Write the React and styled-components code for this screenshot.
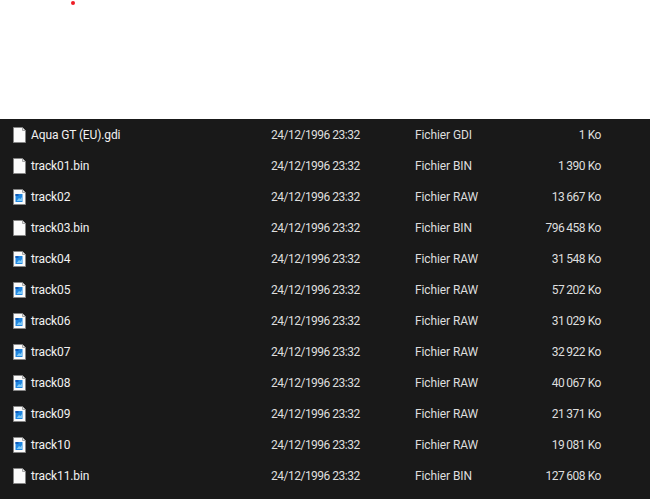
import styled, { createGlobalStyle } from 'styled-components';

const GlobalStyle = createGlobalStyle`
  html, body {
    margin: 0;
    padding: 0;
    background: #fff;
  }
`;

const files = [
  { name: 'Aqua GT (EU).gdi', type: 'Fichier GDI', size: '1 Ko' },
  { name: 'track01.bin', type: 'Fichier BIN', size: '1\u2009390 Ko' },
  { name: 'track02', type: 'Fichier RAW', size: '13\u2009667 Ko', raw: true },
  { name: 'track03.bin', type: 'Fichier BIN', size: '796\u2009458 Ko' },
  { name: 'track04', type: 'Fichier RAW', size: '31\u2009548 Ko', raw: true },
  { name: 'track05', type: 'Fichier RAW', size: '57\u2009202 Ko', raw: true },
  { name: 'track06', type: 'Fichier RAW', size: '31\u2009029 Ko', raw: true },
  { name: 'track07', type: 'Fichier RAW', size: '32\u2009922 Ko', raw: true },
  { name: 'track08', type: 'Fichier RAW', size: '40\u2009067 Ko', raw: true },
  { name: 'track09', type: 'Fichier RAW', size: '21\u2009371 Ko', raw: true },
  { name: 'track10', type: 'Fichier RAW', size: '19\u2009081 Ko', raw: true },
  { name: 'track11.bin', type: 'Fichier BIN', size: '127\u2009608 Ko' },
];

const FileIcon = ({ raw }) => (
  <IconSvg width="13" height="16" viewBox="0 0 13 16">
    <path d="M0.5 0.5H9L12.5 4V15.5H0.5Z" fill="#fbfbfb" stroke="#858585" />
    <path d="M9.5 0.5V3.5H12.5" fill="#e6e6e6" stroke="#a5a5a5" />
    {raw && (
      <>
        <rect x="2.5" y="5" width="7" height="8" fill="#1f86e0" />
        <path d="M3.5 12L6 9L7.5 10L9 8V12Z" fill="#7cc8f5" />
        <rect x="2.5" y="5" width="3" height="2" fill="#1259b5" />
      </>
    )}
  </IconSvg>
);

const App = () => (
  <Page>
    <GlobalStyle />
    <TopArea>
      <RedDot />
    </TopArea>
    <FileList>
      {files.map((file) => (
        <FileRow key={file.name}>
          <NameCell>
            <FileIcon raw={file.raw} />
            <span>{file.name}</span>
          </NameCell>
          <DateCell>24/12/1996 23:32</DateCell>
          <TypeCell>{file.type}</TypeCell>
          <SizeCell>{file.size}</SizeCell>
        </FileRow>
      ))}
    </FileList>
  </Page>
);

export default App;

const Page = styled.div`
  width: 650px;
  height: 499px;
  overflow: hidden;
  font-family: Roboto, 'Open Sans', sans-serif;
  font-size: 12px;
`;
const TopArea = styled.div`
  position: relative;
  height: 119px;
  background: #fff;
`;
const RedDot = styled.div`
  position: absolute;
  left: 71px;
  top: 1px;
  width: 4px;
  height: 4px;
  border-radius: 50%;
  background: #ee1c25;
`;
const FileList = styled.div`
  height: 380px;
  background: #191919;
`;
const FileRow = styled.div`
  display: grid;
  grid-template-columns: 271px 144px 100px 86px;
  align-items: center;
  height: 31px;
  color: #dedede;
`;
const NameCell = styled.div`
  display: flex;
  align-items: center;
  gap: 5px;
  padding-left: 13px;
  color: #f2f2f2;
  letter-spacing: -0.12px;
`;
const IconSvg = styled.svg`
  flex: none;
`;
const DateCell = styled.div`
  white-space: nowrap;
  letter-spacing: -0.5px;
`;
const TypeCell = styled.div`
  white-space: nowrap;
  letter-spacing: -0.1px;
`;
const SizeCell = styled.div`
  text-align: right;
  white-space: nowrap;
  letter-spacing: -0.45px;
`;
